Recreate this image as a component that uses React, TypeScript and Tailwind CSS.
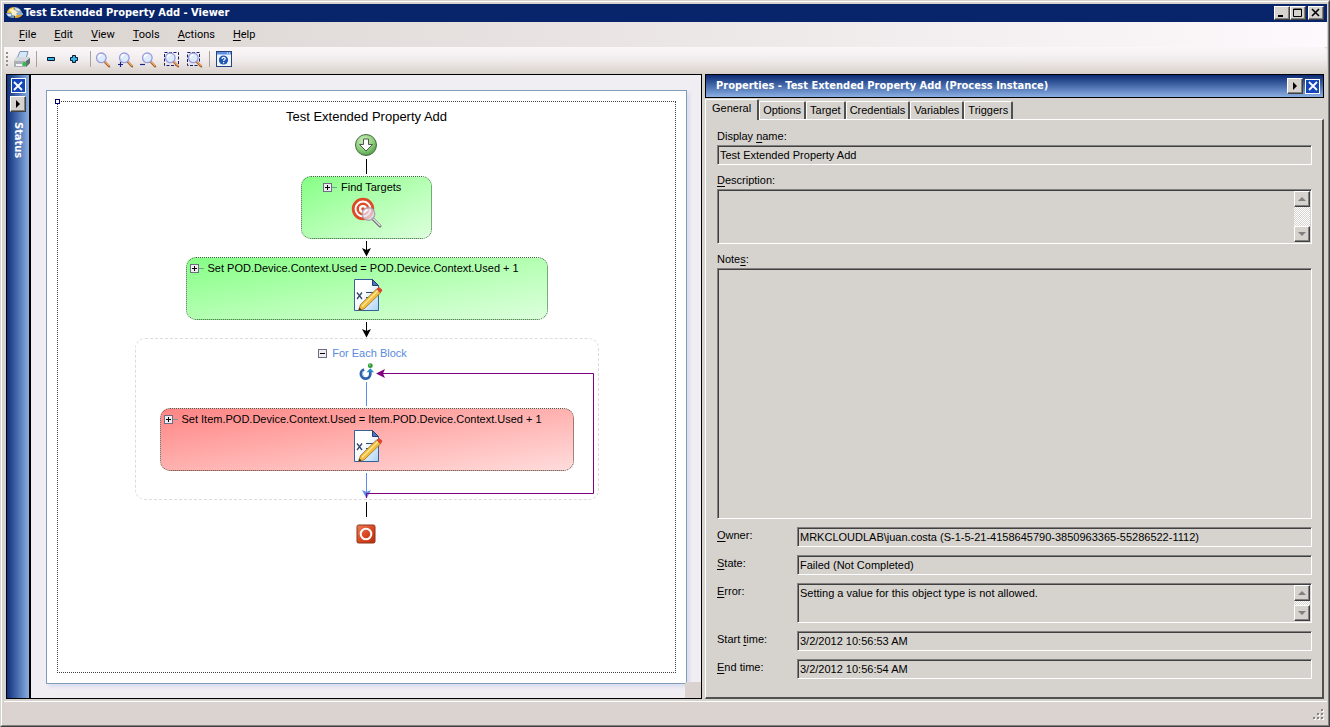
import { useState, type ReactNode } from "react";
import clsx from "clsx";

const MENUS = ["&File", "&Edit", "&View", "&Tools", "&Actions", "&Help"];
const TABS = ["General", "Options", "Target", "Credentials", "Variables", "Triggers"];

const RAISED =
  "border border-t-white border-l-white border-r-[#404040] border-b-[#404040] bg-[#d6d3ce] shadow-[inset_-1px_-1px_0_#808080]";
const SUNKEN =
  "border border-t-[#808080] border-l-[#808080] border-r-white border-b-white shadow-[inset_1px_1px_0_#404040]";

// "&File" -> F underlined
function Mnemonic({ text }: { text: string }) {
  const at = text.indexOf("&");
  if (at < 0) return <>{text}</>;
  return (
    <>
      {text.slice(0, at)}
      <u className="underline-offset-2">{text[at + 1]}</u>
      {text.slice(at + 2)}
    </>
  );
}

function AppIcon() {
  return (
    <svg viewBox="0 0 17 16" className="h-4 w-[17px] shrink-0">
      <path d="M1 8c0-3 3-6 7-6l1 6z" fill="#e9b92f" />
      <path d="M3 5l4-2 1 3-3 1z" fill="#fff1b0" />
      <path d="M8 2c4 0 7 2 8 6H9z" fill="#9fb0bd" />
      <path d="M9 3l4 1 1 2-4-1z" fill="#e6eef5" />
      <path d="M0 8h8v5c-5 0-7-2-8-5z" fill="#6f96ba" />
      <path d="M8 8h9c-1 4-4 5-8 5z" fill="#e2a72a" />
      <path d="M5 6l4-1 3 3-2 3-4-1z" fill="#f7efd0" />
      <path d="M10 8h7v2h-6z" fill="#8fb0cc" />
      <path d="M1 9h4v2H2z" fill="#d9e6f0" />
    </svg>
  );
}

function PrinterIcon() {
  return (
    <svg viewBox="0 0 18 18" className="h-[18px] w-[18px]">
      <path d="M7 1.500h8l-2 7H4z" fill="#d4e8fa" stroke="#7892b0" />
      <path d="M1 11l3-4h11l2 1v5l-4 4H2l-1-1z" fill="#8f969c" />
      <path d="M4 7h11l2 1-3 3H1z" fill="#d3d9dd" />
      <path d="M1 11h12v6H2l-1-1z" fill="#aab1b6" />
      <path d="M13 11l4-3v5l-4 4z" fill="#666d72" />
      <path d="M3 14h6v2H3z" fill="#f5f7f8" />
      <circle cx="11.500" cy="14" r="1.900" fill="#22c43a" />
    </svg>
  );
}

function ZoomIcon({ kind }: { kind?: "in" | "out" | "page" | "fit" }) {
  return (
    <svg viewBox="0 0 17 17" className="h-[17px] w-[17px]">
      {kind === "page" && (
        <rect x="1.5" y="1.5" width="14" height="13" fill="none" stroke="#10206c" strokeDasharray="3 1.5" />
      )}
      {kind === "fit" && (
        <rect x="1.5" y="1.5" width="12" height="13" fill="none" stroke="#10206c" strokeDasharray="3 1.5" />
      )}
      <path d="M10.5 10.5l4.5 4.8" stroke="#a45a24" strokeWidth="2.4" strokeLinecap="round" />
      <path d="M10.8 10.3l4.2 4.4" stroke="#f0b478" strokeWidth="1.2" strokeLinecap="round" />
      <circle cx="7.3" cy="6.8" r="4.8" fill="#dcebfb" stroke="#9a9cdb" strokeWidth="1.3" />
      <path d="M4.5 6.5a3 3 0 0 1 3-2.8" fill="none" stroke="#fff" strokeWidth="1.4" />
      {kind === "in" && <path d="M1 13.5h5M3.5 11v5" stroke="#14208c" strokeWidth="1.2" />}
      {kind === "out" && <path d="M0 13.5h5" stroke="#14208c" strokeWidth="1.2" />}
    </svg>
  );
}

function HelpIcon() {
  return (
    <svg viewBox="0 0 16 16" className="h-4 w-4">
      <rect x="0.5" y="0.5" width="15" height="15" fill="#eef4fd" stroke="#26427c" />
      <path d="M1 1h14v2.5H1z" fill="#5b8fe0" />
      <path d="M11 2h1M13 2h1" stroke="#fff" />
      <circle cx="7.500" cy="9" r="4.600" fill="#1f57b4" />
      <path d="M6 8c0-2.2 3.4-2 3.2-.2C9.100 8.900 7.600 8.700 7.600 10" fill="none" stroke="#fff" strokeWidth="1.2" />
      <path d="M7 11h1.200v1.200H7z" fill="#fff" />
    </svg>
  );
}

function StepIcon({ plus }: { plus?: boolean }) {
  return (
    <svg viewBox="0 0 10 10" className="h-2.5 w-2.5">
      <path
        d={plus ? "M3.500 1.500h3v2h2v3h-2v2h-3v-2h-2v-3h2z" : "M1.500 3.500h7v3h-7z"}
        fill="#35b4e8"
        stroke="#06162c"
      />
    </svg>
  );
}

function TargetIcon() {
  return (
    <svg viewBox="0 0 32 32" className="h-8 w-8">
      <circle cx="12" cy="12" r="9.800" fill="#fff" stroke="#dd4a26" strokeWidth="2.800" />
      <circle cx="12" cy="12" r="5.300" fill="#fff" stroke="#dd4a26" strokeWidth="2.400" />
      <circle cx="12" cy="12" r="1.800" fill="#dd4a26" />
      <path d="M21.500 21.500l7.500 7.500" stroke="#6d6d6d" strokeWidth="3" strokeLinecap="round" />
      <path d="M22 21.500l7 7" stroke="#e9e9e9" strokeWidth="1.300" strokeLinecap="round" />
      <circle cx="17.500" cy="17" r="6.300" fill="#e9dcea" fillOpacity="0.750" stroke="#a9a3b4" strokeWidth="1.300" />
      <path d="M13.500 16a4 4 0 0 1 4-3" fill="none" stroke="#fff" strokeWidth="1.200" />
    </svg>
  );
}

function ScriptIcon() {
  return (
    <svg viewBox="0 0 32 34" className="h-[34px] w-8">
      <defs>
        <linearGradient id="sheet" x1="0" y1="0" x2="1" y2="1">
          <stop offset="0.400" stopColor="#fff" />
          <stop offset="1" stopColor="#a9d2f7" />
        </linearGradient>
      </defs>
      <path d="M3.500 1.500h18l6 6v25h-24z" fill="url(#sheet)" stroke="#35609a" />
      <path d="M21.500 1.500v6h6z" fill="#4a74c4" stroke="#28406e" />
      <path d="M6 14.500l5 6.500M11 14.500l-5 6.500" stroke="#34466c" strokeWidth="1.300" />
      <path d="M15 14.500h8M15 19.500h5" stroke="#34466c" strokeWidth="1.200" />
      <path d="M7.500 32.500l2-6 16-15.500 4 4L13 31z" fill="#f3bd3c" stroke="#8c6420" strokeWidth="0.700" />
      <path d="M11 28.500l16-16" stroke="#ffe79a" strokeWidth="1.300" />
      <path d="M7.500 32.500l1-3 2 2z" fill="#3c2c18" />
      <path d="M26 11l2-1.500 3 2.500-1.500 2.500z" fill="#dc4630" stroke="#dc4630" strokeLinejoin="round" />
    </svg>
  );
}

function StartIcon() {
  return (
    <svg viewBox="0 0 24 24" className="h-6 w-6">
      <defs>
        <radialGradient id="go" cx="0.400" cy="0.300" r="0.750">
          <stop offset="0" stopColor="#d0efc2" />
          <stop offset="0.600" stopColor="#8bcd78" />
          <stop offset="1" stopColor="#4b9843" />
        </radialGradient>
      </defs>
      <circle cx="12" cy="12" r="10.500" fill="url(#go)" stroke="#4a6e48" />
      <path d="M9.500 6h5v5.500h4L12 18l-6.500-6.500h4z" fill="#fff" stroke="#4c5a4c" strokeLinejoin="round" />
    </svg>
  );
}

function LoopIcon() {
  return (
    <svg viewBox="0 0 16 18" className="h-[18px] w-4">
      <path d="M5 6.800a5 5 0 1 0 6.500 5V8.500" fill="none" stroke="#2f62ac" strokeWidth="2.800" />
      <path d="M3.800 8.500a4.500 4.500 0 0 0 1 6" fill="none" stroke="#8ab6e6" />
      <path d="M7.500 9.800L11.500 5.500l4 4.300z" fill="#2a86c8" />
      <circle cx="11.500" cy="2.800" r="2.600" fill="#2e9a34" />
      <circle cx="11" cy="2.200" r="0.900" fill="#8fe08a" />
    </svg>
  );
}

function StopIcon() {
  return (
    <svg viewBox="0 0 20 20" className="h-5 w-5">
      <defs>
        <linearGradient id="halt" x1="0" y1="0" x2="1" y2="1">
          <stop offset="0" stopColor="#f08058" />
          <stop offset="0.550" stopColor="#d84420" />
          <stop offset="1" stopColor="#b83010" />
        </linearGradient>
      </defs>
      <rect x="1" y="1" width="18" height="18" rx="1.500" fill="url(#halt)" stroke="#8c3418" />
      <circle cx="10" cy="10" r="5.300" fill="none" stroke="#fff" strokeWidth="2" />
    </svg>
  );
}

// Vertical connector; the svg is as tall as the gap it bridges.
function Connector({ height, arrow, color = "#000" }: { height: number; arrow?: boolean; color?: string }) {
  return (
    <svg width="13" height={height} className="block shrink-0">
      <path d={`M6.500 2V${height - 2}`} stroke={color} />
      {arrow && <path d={`M2 ${height - 9}l4.500 2 4.500-2-4.500 8.500z`} fill={color} />}
    </svg>
  );
}

function Expander({ open, onClick }: { open?: boolean; onClick?: () => void }) {
  return (
    <button type="button" aria-label={open ? "Collapse" : "Expand"} onClick={onClick} className="block">
      <svg viewBox="0 0 14 9" className="h-[9px] w-3.5">
        <rect x="0.500" y="0.500" width="8" height="8" fill="#efedf3" stroke="#6d6d80" />
        <path d={open ? "M2 4.500h5" : "M2 4.500h5M4.500 2v5"} stroke="#000" />
        {!open && <path d="M9 4.500h5" stroke="#7c9c9c" />}
      </svg>
    </button>
  );
}

function Activity({ label, className, children }: { label: string; className: string; children: ReactNode }) {
  return (
    <div
      className={clsx(
        "flex h-[63px] max-w-full shrink-0 flex-col items-center rounded-[10px] border border-dotted border-[#4c5c4c]",
        className,
      )}
    >
      <div className="flex h-5 w-full items-center gap-1 px-[3px]">
        <Expander />
        <span className="text-[11px] leading-5 whitespace-nowrap">{label}</span>
      </div>
      {children}
    </div>
  );
}

function ToolButton({ label, children }: { label: string; children: ReactNode }) {
  return (
    <button type="button" aria-label={label} className="flex h-5 w-[23px] items-center justify-center">
      {children}
    </button>
  );
}

function Separator({ className }: { className?: string }) {
  return <span className={clsx("h-4 w-px bg-[#a8a29e]", className)} />;
}

function CaptionButton({ label, children }: { label: string; children: ReactNode }) {
  return (
    <button type="button" aria-label={label} className={clsx("flex h-3.5 w-4 items-center justify-center", RAISED)}>
      <svg viewBox="0 0 10 10" className="h-2.5 w-2.5" fill="none" stroke="#000">
        {children}
      </svg>
    </button>
  );
}

function PaneClose({ label }: { label: string }) {
  return (
    <button
      type="button"
      aria-label={label}
      className="flex h-[15px] w-[15px] items-center justify-center border border-white bg-[#1546b8]"
    >
      <svg viewBox="0 0 10 10" className="h-2.5 w-2.5" stroke="#fff" strokeWidth="1.800">
        <path d="M1 1l8 8M9 1L1 9" />
      </svg>
    </button>
  );
}

function PaneArrow({ label }: { label: string }) {
  return (
    <button type="button" aria-label={label} className={clsx("flex h-4 w-4 items-center justify-center", RAISED)}>
      <svg viewBox="0 0 8 8" className="h-2 w-2">
        <path d="M2 0l4 4-4 4z" />
      </svg>
    </button>
  );
}

function ScrollBar() {
  return (
    <div className="flex w-4 shrink-0 flex-col bg-[repeating-conic-gradient(#fff_0_25%,#d6d3ce_0_50%)] bg-[length:2px_2px]">
      <button type="button" aria-label="Scroll up" className={clsx("flex h-4 items-center justify-center", RAISED)}>
        <svg viewBox="0 0 8 4" className="h-1 w-2" fill="#808080">
          <path d="M4 0l4 4H0z" />
        </svg>
      </button>
      <div className="flex-1" />
      <button type="button" aria-label="Scroll down" className={clsx("flex h-4 items-center justify-center", RAISED)}>
        <svg viewBox="0 0 8 4" className="h-1 w-2" fill="#808080">
          <path d="M0 0h8L4 4z" />
        </svg>
      </button>
    </div>
  );
}

function TextField({ id, value }: { id: string; value: string }) {
  return (
    <input id={id} readOnly value={value} className={clsx("h-5 w-full min-w-0 px-0.5 outline-none", SUNKEN)} />
  );
}

function MemoField({
  id,
  value = "",
  className,
  scroll,
}: {
  id: string;
  value?: string;
  className: string;
  scroll?: boolean;
}) {
  return (
    <div className={clsx("flex w-full p-px", SUNKEN, className)}>
      <textarea
        id={id}
        readOnly
        defaultValue={value}
        className="min-w-0 flex-1 resize-none overflow-hidden px-px leading-4 outline-none"
      />
      {scroll && <ScrollBar />}
    </div>
  );
}

function Row({ id, label, children }: { id: string; label: string; children: ReactNode }) {
  return (
    <div className="mt-2 flex items-start">
      <label htmlFor={id} className="w-20 shrink-0 leading-4">
        <Mnemonic text={label} />
      </label>
      {children}
    </div>
  );
}

function Workflow() {
  return (
    <div className="flex min-w-0 flex-1 flex-col items-center text-black">
      <h1 className="mt-1.5 text-[13px] leading-[18px]">Test Extended Property Add</h1>
      <div className="mt-[7px] mr-0.5">
        <StartIcon />
      </div>
      <Connector height={19} />
      <Activity label="Find Targets" className="w-[131px] bg-linear-to-br from-[#84ff84] to-[#dcffdc] pl-[18px]">
        <div className="mr-[18px]">
          <TargetIcon />
        </div>
      </Activity>
      <Connector height={18} arrow />
      <Activity
        label="Set POD.Device.Context.Used = POD.Device.Context.Used + 1"
        className="w-[362px] bg-linear-to-br from-[#84ff84] to-[#dcffdc]"
      >
        <ScriptIcon />
      </Activity>
      <Connector height={18} arrow />
      <div className="relative flex h-[162px] w-[464px] shrink-0 flex-col items-center rounded-[10px] border border-dashed border-[#dcdcdc] pt-1">
        <div className="flex h-5 items-center pr-2 text-[11px] leading-5 text-[#5a8ae0]">
          <Expander open />
          For Each Block
        </div>
        <LoopIcon />
        <Connector height={28} color="#5a8cec" />
        <Activity
          label="Set Item.POD.Device.Context.Used = Item.POD.Device.Context.Used + 1"
          className="w-[414px] bg-linear-to-br from-[#ff8484] to-[#ffdcdc]"
        >
          <ScriptIcon />
        </Activity>
        <Connector height={28} arrow color="#5a8cec" />
        <svg width="228" height="132" className="pointer-events-none absolute top-7 left-[230px]">
          <path d="M0.500 131V126.500H227.500V6.500H16" fill="none" stroke="#800080" />
          <path d="M10 6.500l9-4.500-2 4.500 2 4.500z" fill="#800080" />
        </svg>
      </div>
      <Connector height={19} />
      <div className="mt-[5px] mr-0.5">
        <StopIcon />
      </div>
    </div>
  );
}

export default function App() {
  const [tab, setTab] = useState("General");

  return (
    <div className="flex min-h-screen flex-col border border-[#d6d3ce] border-r-[#404040] border-b-[#404040] bg-[#d6d3ce] font-['Liberation_Sans',Arial,sans-serif] text-[11px] text-black">
      <div className="flex flex-1 flex-col border-t border-r border-b border-l border-t-white border-r-[#808080] border-b-[#808080] border-l-white pt-0.5 pr-px pl-0.5">
        <header className="flex h-[18px] items-center bg-[#08246b] pr-[3px] pl-0.5">
          <AppIcon />
          <span className="flex-1 pl-px font-['DejaVu_Sans_Condensed','DejaVu_Sans',sans-serif] text-[11px] font-bold text-white">
            Test Extended Property Add - Viewer
          </span>
          <CaptionButton label="Minimize">
            <path d="M1 8h5" strokeWidth="2" />
          </CaptionButton>
          <CaptionButton label="Maximize">
            <path d="M0.500 1h8v7.500h-8zM0.500 1.500h8" />
          </CaptionButton>
          <span className="w-0.5" />
          <CaptionButton label="Close">
            <path d="M1 1l7 7M8 1L1 8" strokeWidth="1.600" />
          </CaptionButton>
        </header>

        <nav className="flex h-[25px] items-center bg-linear-to-r from-[#dad4d0] to-[#fdf9fc] pt-0.5 pl-1.5">
          {MENUS.map((menu) => (
            <button key={menu} type="button" className="px-[9px] font-['Roboto',sans-serif] text-[11px]">
              <Mnemonic text={menu} />
            </button>
          ))}
        </nav>

        <div className="flex h-[26px] items-center rounded-r-sm bg-linear-to-b from-[#fbf7f9] via-[#f1ecec] to-[#d9d2cd] pb-0.5 pl-0.5">
          <svg viewBox="0 0 2 14" className="mr-0.5 h-3.5 w-0.5">
            <path d="M1 0v14" stroke="#948e8a" strokeWidth="2" strokeDasharray="2 2" />
          </svg>
          <ToolButton label="Print">
            <PrinterIcon />
          </ToolButton>
          <Separator className="mr-0.5 ml-[3px]" />
          <ToolButton label="Collapse all">
            <StepIcon />
          </ToolButton>
          <ToolButton label="Expand all">
            <StepIcon plus />
          </ToolButton>
          <Separator className="ml-[5px]" />
          <ToolButton label="Zoom">
            <ZoomIcon />
          </ToolButton>
          <ToolButton label="Zoom in">
            <ZoomIcon kind="in" />
          </ToolButton>
          <ToolButton label="Zoom out">
            <ZoomIcon kind="out" />
          </ToolButton>
          <ToolButton label="Whole page">
            <ZoomIcon kind="page" />
          </ToolButton>
          <ToolButton label="Fit selection">
            <ZoomIcon kind="fit" />
          </ToolButton>
          <Separator className="mr-0.5 ml-[3px]" />
          <ToolButton label="Help">
            <HelpIcon />
          </ToolButton>
        </div>

        <main className="mt-px grid flex-1 grid-cols-[696fr_619fr] gap-[3px] pr-[3px] pl-0.5">
          <div className="flex min-w-0 border border-black">
            <aside className="flex w-6 shrink-0 flex-col items-center border-r-2 border-black bg-linear-to-r from-[#10307c] to-[#8cb0e4] pt-[3px]">
              <PaneClose label="Close status" />
              <div className="mt-[3px]">
                <PaneArrow label="Expand status" />
              </div>
              <span className="mt-2.5 font-['DejaVu_Sans_Condensed','DejaVu_Sans',sans-serif] text-[11px] leading-4 font-bold text-white [writing-mode:vertical-rl]">
                Status
              </span>
            </aside>
            <div className="relative flex min-w-0 flex-1 bg-[#f0edf3] pt-[15px] pr-3.5 pb-3.5 pl-[15px]">
              <div className="flex min-w-0 flex-1 border border-[#7f9db9] bg-white p-2.5 shadow-[3px_3px_3px_#dcdff0]">
                <div className="relative flex min-w-0 flex-1 border border-dotted border-[#404040]">
                  <span className="absolute -top-[3px] -left-[3px] h-[5px] w-[5px] border border-[#000068] bg-white" />
                  <Workflow />
                </div>
              </div>
              <span className="absolute right-0 bottom-0 h-4 w-4 bg-[#d9d2cf]" />
            </div>
          </div>

          <section className="flex min-w-0 flex-col">
            <div className="flex h-6 items-center gap-0.5 border border-black bg-linear-to-b from-[#0c2a74] to-[#8cb0e4] pr-[3px] pl-2.5">
              <h2 className="flex-1 font-['DejaVu_Sans_Condensed','DejaVu_Sans',sans-serif] text-[11px] font-bold text-white">
                Properties - Test Extended Property Add (Process Instance)
              </h2>
              <PaneArrow label="Pane menu" />
              <PaneClose label="Close properties" />
            </div>

            <div role="tablist" className="mt-px flex h-5 items-end">
              {TABS.map((name) => (
                <button
                  key={name}
                  type="button"
                  role="tab"
                  aria-selected={tab === name}
                  onClick={() => setTab(name)}
                  className={clsx(
                    "rounded-t-xs border-t border-r-2 border-l border-t-white border-r-[#505050] border-l-white bg-[#d6d3ce]",
                    tab === name ? "z-10 -mb-px h-[21px] px-1.5 pb-1" : "h-[18px] px-[3px]",
                  )}
                >
                  {name}
                </button>
              ))}
            </div>

            <div className="flex flex-1 flex-col border-t border-r-2 border-b-2 border-l border-t-white border-r-[#505050] border-b-[#505050] border-l-white pt-2 pr-2.5 pb-[18px] pl-[11px]">
              <label htmlFor="display-name" className="leading-[17px]">
                <Mnemonic text="Display &name:" />
              </label>
              <TextField id="display-name" value="Test Extended Property Add" />
              <label htmlFor="description" className="mt-[7px] leading-[17px]">
                <Mnemonic text="&Description:" />
              </label>
              <MemoField id="description" className="h-[55px]" scroll />
              <label htmlFor="notes" className="mt-[7px] leading-[17px]">
                <Mnemonic text="Note&s:" />
              </label>
              <MemoField id="notes" className="flex-1" />

              <Row id="owner" label="&Owner:">
                <TextField id="owner" value="MRKCLOUDLAB\juan.costa (S-1-5-21-4158645790-3850963365-55286522-1112)" />
              </Row>
              <Row id="state" label="&State:">
                <TextField id="state" value="Failed (Not Completed)" />
              </Row>
              <Row id="error" label="&Error:">
                <MemoField
                  id="error"
                  value="Setting a value for this object type is not allowed."
                  className="h-10"
                  scroll
                />
              </Row>
              <Row id="start-time" label="Start &time:">
                <TextField id="start-time" value="3/2/2012 10:56:53 AM" />
              </Row>
              <Row id="end-time" label="&End time:">
                <TextField id="end-time" value="3/2/2012 10:56:54 AM" />
              </Row>
            </div>
          </section>
        </main>

        <footer className="mt-0.5 flex h-6 items-end justify-end border-t border-white bg-[#dbd3d0] pr-0.5 pb-1">
          <svg viewBox="0 0 12 12" className="h-3 w-3">
            <path d="M9 1h2v2H9zM5 5h2v2H5zM9 5h2v2H9zM1 9h2v2H1zM5 9h2v2H5zM9 9h2v2H9z" fill="#fff" />
            <path d="M8 0h2v2H8zM4 4h2v2H4zM8 4h2v2H8zM0 8h2v2H0zM4 8h2v2H4zM8 8h2v2H8z" fill="#8a8480" />
          </svg>
        </footer>
      </div>
    </div>
  );
}
